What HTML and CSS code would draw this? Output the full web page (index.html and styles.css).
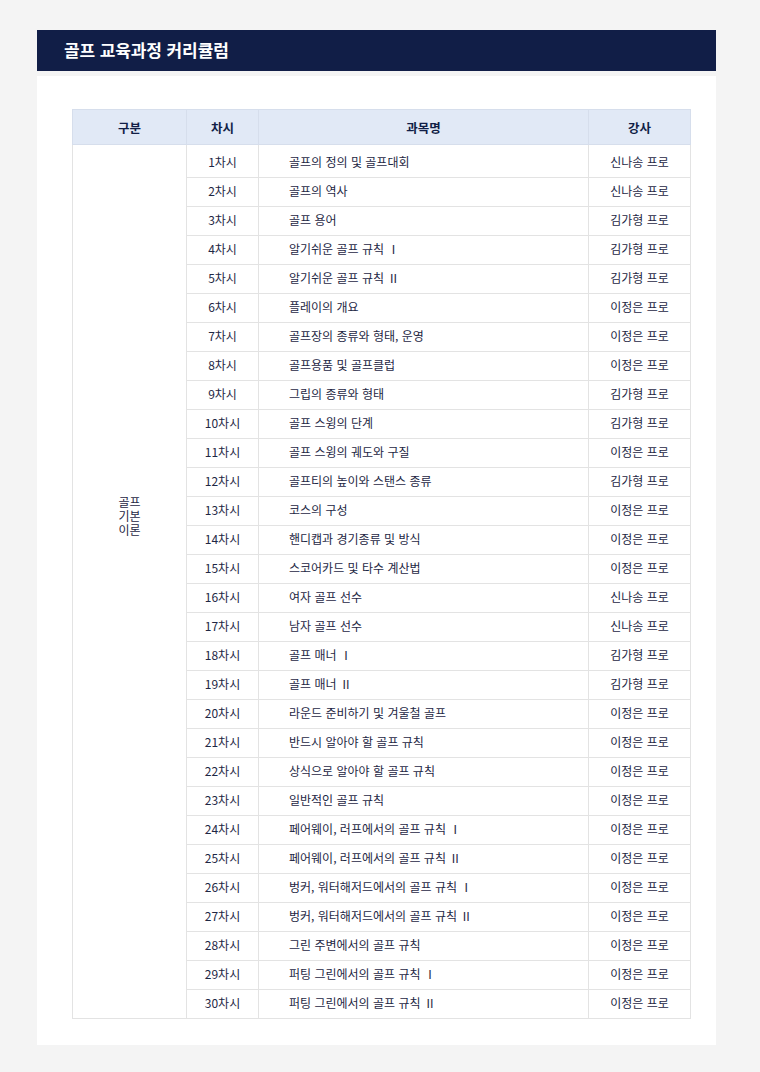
FILE: index.html
```html
<!DOCTYPE html>
<html lang="ko">
<head>
    <meta charset="UTF-8">
    <title>골프 교육과정 커리큘럼</title>
    <link rel="stylesheet" href="styles.css">
</head>
<body>
    <div class="wrap">
        <h1 class="title">골프 교육과정 커리큘럼</h1>
        <div class="panel">
            <table class="curri">
                <colgroup>
                    <col class="c-cat">
                    <col class="c-no">
                    <col class="c-name">
                    <col class="c-teacher">
                </colgroup>
                <thead>
                    <tr>
                        <th>구분</th>
                        <th>차시</th>
                        <th>과목명</th>
                        <th>강사</th>
                    </tr>
                </thead>
                <tbody>
                    <tr class="first">
                        <td class="cat" rowspan="30">골프<br>기본<br>이론</td>
                        <td>1차시</td><td class="name">골프의 정의 및 골프대회</td><td>신나송 프로</td>
                    </tr>
                    <tr><td>2차시</td><td class="name">골프의 역사</td><td>신나송 프로</td></tr>
                    <tr><td>3차시</td><td class="name">골프 용어</td><td>김가형 프로</td></tr>
                    <tr><td>4차시</td><td class="name">알기쉬운 골프 규칙 Ⅰ</td><td>김가형 프로</td></tr>
                    <tr><td>5차시</td><td class="name">알기쉬운 골프 규칙 Ⅱ</td><td>김가형 프로</td></tr>
                    <tr><td>6차시</td><td class="name">플레이의 개요</td><td>이정은 프로</td></tr>
                    <tr><td>7차시</td><td class="name">골프장의 종류와 형태, 운영</td><td>이정은 프로</td></tr>
                    <tr><td>8차시</td><td class="name">골프용품 및 골프클럽</td><td>이정은 프로</td></tr>
                    <tr><td>9차시</td><td class="name">그립의 종류와 형태</td><td>김가형 프로</td></tr>
                    <tr><td>10차시</td><td class="name">골프 스윙의 단계</td><td>김가형 프로</td></tr>
                    <tr><td>11차시</td><td class="name">골프 스윙의 궤도와 구질</td><td>이정은 프로</td></tr>
                    <tr><td>12차시</td><td class="name">골프티의 높이와 스탠스 종류</td><td>김가형 프로</td></tr>
                    <tr><td>13차시</td><td class="name">코스의 구성</td><td>이정은 프로</td></tr>
                    <tr><td>14차시</td><td class="name">핸디캡과 경기종류 및 방식</td><td>이정은 프로</td></tr>
                    <tr><td>15차시</td><td class="name">스코어카드 및 타수 계산법</td><td>이정은 프로</td></tr>
                    <tr><td>16차시</td><td class="name">여자 골프 선수</td><td>신나송 프로</td></tr>
                    <tr><td>17차시</td><td class="name">남자 골프 선수</td><td>신나송 프로</td></tr>
                    <tr><td>18차시</td><td class="name">골프 매너 Ⅰ</td><td>김가형 프로</td></tr>
                    <tr><td>19차시</td><td class="name">골프 매너 Ⅱ</td><td>김가형 프로</td></tr>
                    <tr><td>20차시</td><td class="name">라운드 준비하기 및 겨울철 골프</td><td>이정은 프로</td></tr>
                    <tr><td>21차시</td><td class="name">반드시 알아야 할 골프 규칙</td><td>이정은 프로</td></tr>
                    <tr><td>22차시</td><td class="name">상식으로 알아야 할 골프 규칙</td><td>이정은 프로</td></tr>
                    <tr><td>23차시</td><td class="name">일반적인 골프 규칙</td><td>이정은 프로</td></tr>
                    <tr><td>24차시</td><td class="name">페어웨이, 러프에서의 골프 규칙 Ⅰ</td><td>이정은 프로</td></tr>
                    <tr><td>25차시</td><td class="name">페어웨이, 러프에서의 골프 규칙 Ⅱ</td><td>이정은 프로</td></tr>
                    <tr><td>26차시</td><td class="name">벙커, 워터해저드에서의 골프 규칙 Ⅰ</td><td>이정은 프로</td></tr>
                    <tr><td>27차시</td><td class="name">벙커, 워터해저드에서의 골프 규칙 Ⅱ</td><td>이정은 프로</td></tr>
                    <tr><td>28차시</td><td class="name">그린 주변에서의 골프 규칙</td><td>이정은 프로</td></tr>
                    <tr><td>29차시</td><td class="name">퍼팅 그린에서의 골프 규칙 Ⅰ</td><td>이정은 프로</td></tr>
                    <tr><td>30차시</td><td class="name">퍼팅 그린에서의 골프 규칙 Ⅱ</td><td>이정은 프로</td></tr>
                </tbody>
            </table>
        </div>
    </div>
</body>
</html>
```

FILE: styles.css
```css
body { margin: 0; background: #f4f4f4; font-family: "Noto Sans CJK KR", "Noto Sans", sans-serif; color: #1e2744; }
.wrap { width: 679px; margin: 30px 0 0 37px; }
.title { margin: 0; height: 41px; line-height: 40px; padding-left: 27px; background: #111e47; color: #fff; font-size: 17px; font-weight: bold; letter-spacing: -0.1px; }
.panel { margin-top: 5px; background: #fff; padding: 33px 26px 26px 35px; }

.curri { width: 618px; table-layout: fixed; border-collapse: collapse; font-size: 12px; }
.c-cat { width: 114px; }
.c-no { width: 72px; }
.c-name { width: 330px; }
.c-teacher { width: 102px; }

.curri th { height: 34px; padding: 0; background: #e1e9f6; border: 1px solid #d6deec; font-size: 12.5px; font-weight: bold; color: #111e47; }
.curri td { height: 26px; padding: 0 0 2px; border: 1px solid #e3e3e3; text-align: center; line-height: 14px; }
.curri td.name { text-align: left; padding-left: 30px; }
.curri tr.first td { height: 33px; padding-top: 4px; box-sizing: border-box; }
.curri td.cat { vertical-align: middle; padding: 0 0 136px; line-height: 14px; }
```
